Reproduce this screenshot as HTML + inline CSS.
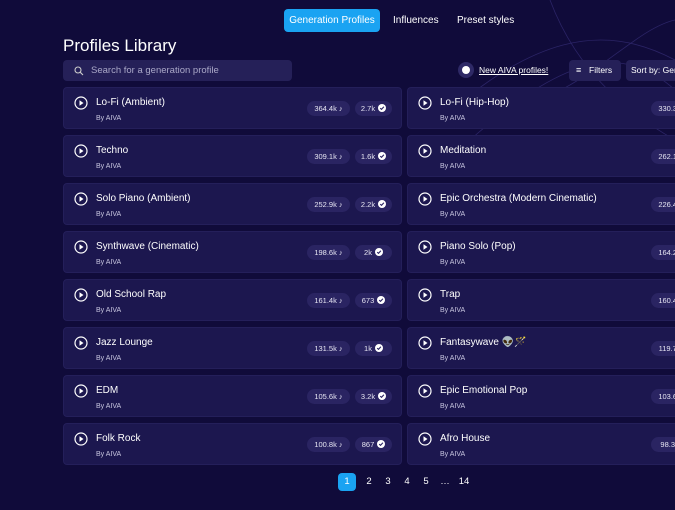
<!DOCTYPE html>
<html><head><style>
*{margin:0;padding:0;box-sizing:border-box}
html{overflow:hidden;width:675px;height:510px}
body{width:675px;height:510px;overflow:hidden;background:#100b3a;font-family:"Liberation Sans",sans-serif;color:#fff;position:relative}
.tab{position:absolute;top:9px;height:23px;line-height:23px;font-size:10px;padding:0 6px;white-space:nowrap}
.tab.a{background:#1aa3f2;border-radius:4px;left:284px;width:96px;text-align:center;padding:0}
h1{position:absolute;left:63px;top:36px;font-size:17px;font-weight:normal}
.search{position:absolute;left:63px;top:60px;width:229px;height:21px;background:#252058;border-radius:4px;font-size:9.5px;color:#aaa8c8;line-height:21px;padding-left:28px}
.search svg{position:absolute;left:11px;top:6px}
.card{position:absolute;width:339px;height:42px;background:#1c174f;border-radius:4px;border:1px solid #241f5a}
.card .t{position:absolute;left:32px;top:9px;font-size:10px;white-space:nowrap}
.card .b{position:absolute;left:32px;top:27px;font-size:7px;color:#c8c6e0}
.card svg.p{position:absolute;left:10px;top:8px}
.pill{position:absolute;top:13px;height:15px;line-height:15px;background:#2a2462;border-radius:8px;font-size:7.5px;text-align:center;color:#e6e5f2;white-space:nowrap}
.btn{position:absolute;top:60px;height:21px;background:#252058;border-radius:4px;font-size:8.5px;line-height:21px;white-space:nowrap;overflow:hidden}
.pg{position:absolute;top:473px;font-size:9.5px;width:18px;height:18px;line-height:18px;text-align:center}
#wrap{position:absolute;left:0;top:0;width:675px;height:510px;overflow:hidden}
</style></head><body><div id="wrap">
<svg style="position:absolute;left:380px;top:0" width="295" height="300"><g fill="none" stroke="#2b2466" stroke-width="0.8"><path d="M60 120 C150 40 220 20 295 60"/><path d="M90 140 C180 60 240 40 295 90"/><path d="M170 0 C200 80 260 120 295 140"/><path d="M120 110 C200 100 250 30 295 20"/></g></svg>
<div class="tab a">Generation Profiles</div>
<div class="tab" style="left:387px">Influences</div>
<div class="tab" style="left:451px">Preset styles</div>
<h1>Profiles Library</h1>
<div class="search"><svg width="10" height="10" viewBox="0 0 10 10"><circle cx="4" cy="4" r="3" stroke="#ccc" fill="none" stroke-width="1.1"/><path d="M6.3 6.3 9 9" stroke="#ccc" stroke-width="1.1"/></svg>Search for a generation profile</div>
<div style="position:absolute;left:458px;top:62px;width:16px;height:16px;border-radius:50%;background:#2e2966"><div style="position:absolute;left:4px;top:4px;width:8px;height:8px;border-radius:50%;background:#fff"></div></div>
<div style="position:absolute;left:479px;top:65px;font-size:8.5px;text-decoration:underline">New AIVA profiles!</div>
<div class="btn" style="left:569px;width:52px;padding-left:20px"><span style="position:absolute;left:7px;top:0;font-size:9px">≡</span>Filters</div>
<div class="btn" style="left:626px;width:49px;padding-left:5px;border-radius:4px 0 0 4px">Sort by: Gen</div>
<div id="c"></div>
<div class="pg" style="left:338px;background:#1aa3f2;border-radius:4px">1</div>
<div class="pg" style="left:360px">2</div><div class="pg" style="left:379px">3</div><div class="pg" style="left:398px">4</div><div class="pg" style="left:417px">5</div><div class="pg" style="left:436px">…</div><div class="pg" style="left:455px">14</div>
</div>
<script>
var L=[["Lo-Fi (Ambient)","364.4k","2.7k"],["Techno","309.1k","1.6k"],["Solo Piano (Ambient)","252.9k","2.2k"],["Synthwave (Cinematic)","198.6k","2k"],["Old School Rap","161.4k","673"],["Jazz Lounge","131.5k","1k"],["EDM","105.6k","3.2k"],["Folk Rock","100.8k","867"]];
var R=[["Lo-Fi (Hip-Hop)","330.3k"],["Meditation","262.1k"],["Epic Orchestra (Modern Cinematic)","226.4k"],["Piano Solo (Pop)","164.2k"],["Trap","160.4k"],["Fantasywave 👽🪄","119.7k"],["Epic Emotional Pop","103.6k"],["Afro House","98.3k"]];
var play='<svg class="p" width="14" height="14" viewBox="0 0 14 14"><circle cx="7" cy="7" r="6" fill="none" stroke="#fff" stroke-width="1.2"/><path d="M5.5 4.3 9.5 7 5.5 9.7Z" fill="#fff"/></svg>';
var chk='<svg width="8" height="8" viewBox="0 0 8 8" style="vertical-align:-1px;margin-left:3px"><circle cx="4" cy="4" r="4" fill="#fff"/><path d="M2.2 4.1 3.5 5.3 5.9 2.8" stroke="#2a2462" stroke-width="1.1" fill="none"/></svg>';
var h='';
for(var i=0;i<8;i++){var y=87+i*48;
h+='<div class="card" style="left:63px;top:'+y+'px">'+play+'<div class="t">'+L[i][0]+'</div><div class="b">By AIVA</div><div class="pill" style="left:243px;width:43px">'+L[i][1]+' ♪</div><div class="pill" style="left:291px;width:37px">'+L[i][2]+chk+'</div></div>';
h+='<div class="card" style="left:407px;top:'+y+'px;width:268px;border-right:none;border-radius:4px 0 0 4px;overflow:hidden">'+play+'<div class="t">'+R[i][0]+'</div><div class="b">By AIVA</div><div class="pill" style="left:243px;width:43px">'+R[i][1]+' ♪</div></div>';}
document.getElementById('c').innerHTML=h;
</script>
</body></html>
